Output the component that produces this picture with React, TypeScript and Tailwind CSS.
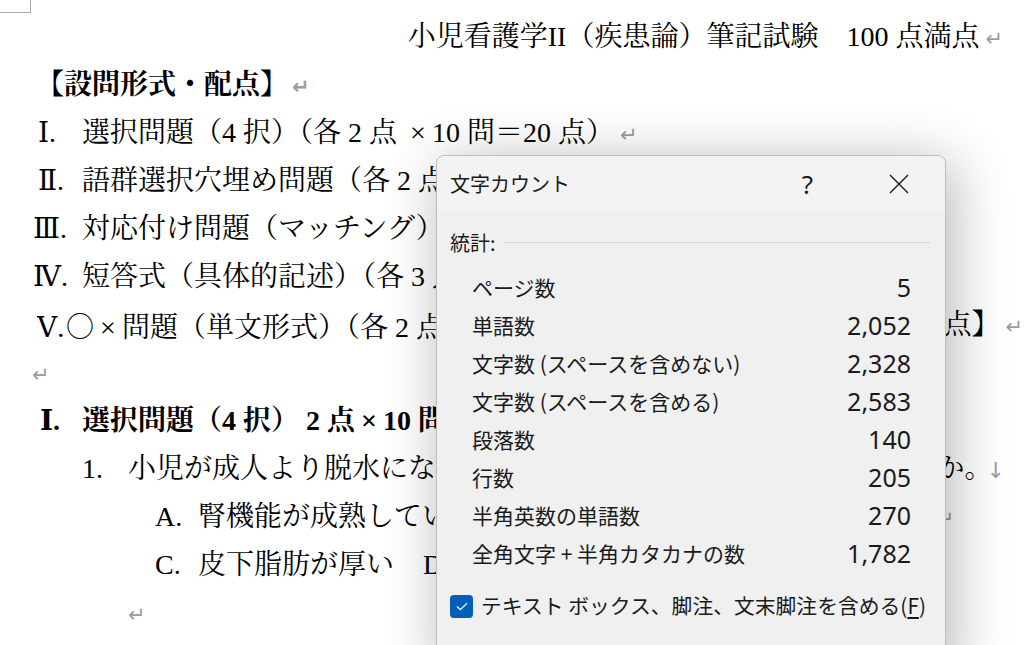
import type { ReactNode } from 'react'

const ret = <span className="ml-[6px] font-['DejaVu_Sans',sans-serif] text-[21px] text-[#9d9d9d]">↵</span>
const times = <span className="inline-block w-[28px] text-center">×</span>

function Row({ className = '', children, tail }: { className?: string; children: ReactNode; tail?: ReactNode }) {
  return (
    <div className={`flex h-[48px] whitespace-nowrap leading-[48px] ${className}`}>
      <div className="min-w-0 flex-1 overflow-hidden">{children}</div>
      {tail}
    </div>
  )
}

const stats = [
  ['ページ数', '5'],
  ['単語数', '2,052'],
  ['文字数 (スペースを含めない)', '2,328'],
  ['文字数 (スペースを含める)', '2,583'],
  ['段落数', '140'],
  ['行数', '205'],
  ['半角英数の単語数', '270'],
  ['全角文字 + 半角カタカナの数', '1,782'],
]

function WordCountDialog() {
  return (
    <div className="absolute left-[436px] top-[155px] h-[520px] w-[510px] rounded-t-[8px] border border-[#bdbdbd] bg-[#f0f0f0] font-['Noto_Sans_CJK_JP',sans-serif] text-[#1a1a1a] shadow-[6px_8px_56px_rgba(0,0,0,0.3)]">
      <div className="flex h-[56px] items-center rounded-t-[8px] bg-[#f3f3f3] pl-[13px] pr-[36px]">
        <span className="text-[20px]">文字カウント</span>
        <span className="ml-auto mr-[76px] font-['Noto_Sans',sans-serif] text-[26px] leading-none">?</span>
        <svg width="20" height="20" viewBox="0 0 20 20" className="text-[#1a1a1a]">
          <path d="M1 1 L19 19 M19 1 L1 19" stroke="currentColor" strokeWidth="1.4" fill="none" />
        </svg>
      </div>
      <div className="pl-[13px] pr-[15px]">
        <div className="mt-[16px] flex h-[30px] items-center">
          <span className="text-[20px]">統計:</span>
          <div className="ml-[8px] mt-[-2px] h-px flex-1 bg-[#d6d6d6]" />
        </div>
        <div className="mt-[11px] pl-[22px] pr-[19px]">
          {stats.map(([label, value]) => (
            <div key={label} className="flex h-[38px] items-center justify-between">
              <span className="text-[21px]">{label}</span>
              <span className="font-['Noto_Sans',sans-serif] text-[25px]">{value}</span>
            </div>
          ))}
        </div>
        <div className="mt-[18px] flex h-[30px] items-center whitespace-nowrap">
          <span className="flex h-[23px] w-[23px] shrink-0 items-center justify-center rounded-[4px] bg-[#005fb8]">
            <svg width="12" height="9" viewBox="0 0 12 9">
              <path d="M1 4.5 L4.3 7.6 L11 1.2" stroke="#fff" strokeWidth="1.3" fill="none" />
            </svg>
          </span>
          <span className="ml-[8px] text-[20.8px]">
            テキスト ボックス、脚注、文末脚注を含める(<span className="underline underline-offset-[3px]">F</span>)
          </span>
        </div>
      </div>
    </div>
  )
}

export default function App() {
  return (
    <div className="relative h-[645px] w-full overflow-hidden bg-white font-['Liberation_Serif','DejaVu_Serif','Noto_Serif_CJK_JP','Noto_Sans_CJK_JP',serif] text-[28px] text-black">
      <div className="h-[13px] w-[31px] border-b border-r border-[#a8a8a8]" />

      <Row className="justify-end pr-[22px]">
        <div className="text-right">
          小児看護学II（疾患論）筆記試験　100 点満点{ret}
        </div>
      </Row>
      <Row className="pl-[36px] font-bold">
        【設問形式・配点】<span className="ml-[-2px]">{ret}</span>
      </Row>
      <Row className="pl-[38px]">
        <span className="inline-block w-[44px]">Ⅰ.</span>選択問題（4 択）（各 2 点 {times}10 問＝20 点）{ret}
      </Row>
      <Row className="pl-[38px]">
        <span className="inline-block w-[44px]">Ⅱ.</span>語群選択穴埋め問題（各 2 点 {times}10 問＝20 点）{ret}
      </Row>
      <Row className="pl-[33px]">
        <span className="inline-block w-[49px]">Ⅲ.</span>対応付け問題（マッチング）（各 2 点 {times}10 問＝20 点）{ret}
      </Row>
      <Row className="pl-[33px]">
        <span className="inline-block w-[49px]">Ⅳ.</span>短答式（具体的記述）（各 3 点 {times}10 問＝30 点）{ret}
      </Row>
      <Row
        className="pl-[37px]"
        tail={
          <span className="pr-[2px]">
            点】{ret}
          </span>
        }
      >
        <span className="inline-block w-[29px]">Ⅴ.</span>
        <span className="inline-block w-[28px] text-center font-['Noto_Sans_CJK_JP',sans-serif]">○</span>
        {times}問題（単文形式）（各 2 点 {times}5 問＝10 点）【合計 100
      </Row>
      <Row className="pl-[26px]">{ret}</Row>
      <Row className="pl-[40px] font-bold">
        <span className="inline-block w-[42px]">Ⅰ.</span>選択問題（4 択）  2 点{times}10 問＝20 点{ret}
      </Row>
      <Row
        className="pl-[82px]"
        tail={
          <span className="pr-[20px]">
            か。<span className="ml-[-6px] font-['DejaVu_Sans',sans-serif] text-[22px] text-[#9d9d9d]">↓</span>
          </span>
        }
      >
        <span className="inline-block w-[46px]">1.</span>小児が成人より脱水になりやすい理由として正しいもの
      </Row>
      <Row className="pl-[155px]">
        <span className="inline-block w-[43px]">A.</span>腎機能が成熟していない　B. 体重当たりの水分量が少ない{ret}
      </Row>
      <Row className="pl-[155px]">
        <span className="inline-block w-[268px]">
          <span className="inline-block w-[43px]">C.</span>皮下脂肪が厚い
        </span>
        <span className="inline-block w-[43px]">D.</span>不感蒸泄が少ない{ret}
      </Row>
      <Row className="pl-[122px]">{ret}</Row>

      <WordCountDialog />
    </div>
  )
}
